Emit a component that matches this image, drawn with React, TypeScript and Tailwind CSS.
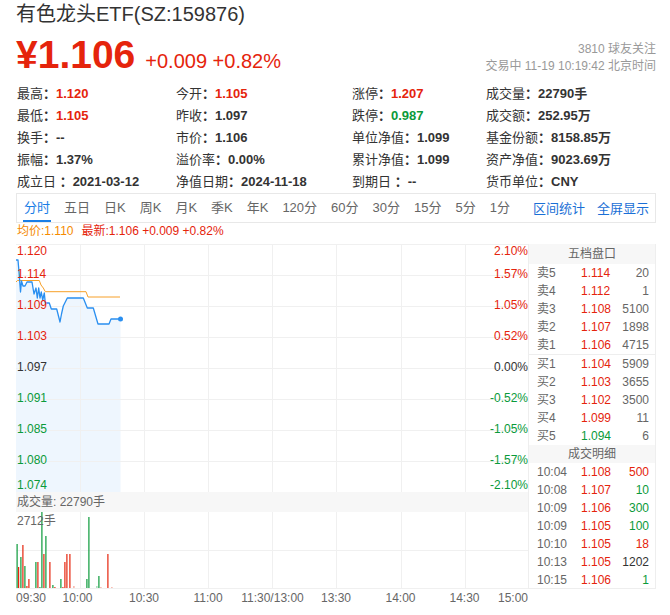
import React from 'react'

const RED = '#e5240c'
const GREEN = '#0a9a3a'

type Cell = { label: string; value: string; color?: string }

const infoRows: Cell[][] = [
  [
    { label: '最高', value: '1.120', color: 'red' },
    { label: '今开', value: '1.105', color: 'red' },
    { label: '涨停', value: '1.207', color: 'red' },
    { label: '成交量', value: '22790手' },
  ],
  [
    { label: '最低', value: '1.105', color: 'red' },
    { label: '昨收', value: '1.097' },
    { label: '跌停', value: '0.987', color: 'green' },
    { label: '成交额', value: '252.95万' },
  ],
  [
    { label: '换手', value: '--' },
    { label: '市价', value: '1.106' },
    { label: '单位净值', value: '1.099' },
    { label: '基金份额', value: '8158.85万' },
  ],
  [
    { label: '振幅', value: '1.37%' },
    { label: '溢价率', value: '0.00%' },
    { label: '累计净值', value: '1.099' },
    { label: '资产净值', value: '9023.69万' },
  ],
  [
    { label: '成立日 ', value: '2021-03-12' },
    { label: '净值日期', value: '2024-11-18' },
    { label: '到期日 ', value: '--' },
    { label: '货币单位', value: 'CNY' },
  ],
]

const tabs = ['分时', '五日', '日K', '周K', '月K', '季K', '年K', '120分', '60分', '30分', '15分', '5分', '1分']

const sells = [
  ['卖5', '1.114', '20'],
  ['卖4', '1.112', '1'],
  ['卖3', '1.108', '5100'],
  ['卖2', '1.107', '1898'],
  ['卖1', '1.106', '4715'],
]
const buys = [
  ['买1', '1.104', '5909', 'red'],
  ['买2', '1.103', '3655', 'red'],
  ['买3', '1.102', '3500', 'red'],
  ['买4', '1.099', '11', 'red'],
  ['买5', '1.094', '6', 'green'],
]
const trades = [
  ['10:04', '1.108', '500', 'red'],
  ['10:08', '1.107', '10', 'green'],
  ['10:09', '1.106', '300', 'green'],
  ['10:09', '1.105', '100', 'green'],
  ['10:10', '1.105', '18', 'red'],
  ['10:13', '1.105', '1202', 'dark'],
  ['10:15', '1.106', '1', 'green'],
]

// y labels: [text, y, colour]
const leftLabels: [string, number, string][] = [
  ['1.120', 6.5, RED], ['1.114', 30, RED], ['1.109', 61, RED], ['1.103', 92, RED],
  ['1.097', 123, '#333'], ['1.091', 154, GREEN], ['1.085', 185, GREEN], ['1.080', 216, GREEN], ['1.074', 241, GREEN],
]
const rightLabels: [string, number, string][] = [
  ['2.10%', 6.5, RED], ['1.57%', 30, RED], ['1.05%', 61, RED], ['0.52%', 92, RED],
  ['0.00%', 123, '#333'], ['-0.52%', 154, GREEN], ['-1.05%', 185, GREEN], ['-1.57%', 216, GREEN], ['-2.10%', 241, GREEN],
]

const pricePts: [number, number][] = [
  [0, 16], [2, 16], [3, 28], [4.5, 48], [5.5, 37], [7, 42], [9, 42], [11, 38], [16, 38], [18, 50], [20, 44],
  [21.3, 54], [22.7, 44], [24, 54], [25.3, 48], [26.7, 56], [28.3, 49], [29.3, 59], [33.3, 59], [35.3, 65],
  [40.7, 65], [44, 78], [45.5, 70], [47.3, 62], [51.3, 54], [67.3, 54], [71.3, 64], [77.3, 64], [82, 80],
  [93, 80], [95, 75], [104.5, 75],
]
const avgPts: [number, number][] = [
  [0, 38], [1.5, 36.5], [23.3, 36.5], [25, 41], [27.3, 44], [29.3, 47.7], [70, 47.7], [72, 53], [104, 53],
]

// volume bars: x, top, colour
const bars: [number, number, string][] = [
  [0.5, 32, 'g'], [2, 55, 'r'], [4.3, 45, 'g'], [6.3, 33, 'r'], [8.3, 54, 'g'], [10.3, 74, 'r'], [12.3, 67, 'r'],
  [19.3, 50, 'g'], [21.3, 50, 'r'], [23.3, 75, 'g'], [25.3, 0, 'g'], [27.3, 42, 'r'], [29.3, 24, 'g'],
  [33.3, 50, 'r'], [36.3, 73, 'g'], [38.3, 75, 'r'], [44.3, 67, 'g'], [46.3, 75, 'r'], [48.3, 50, 'r'],
  [50.3, 42, 'r'], [53.3, 42, 'r'], [57.3, 74, 'lr'], [70.3, 67, 'g'], [72.3, 5, 'g'], [80.3, 74, 'lg'],
  [82.3, 64, 'g'], [84.3, 75, 'lr'], [91.3, 42, 'r'], [95.3, 75, 'lr'],
]
const barColor: Record<string, string> = { g: GREEN, r: RED, lr: '#f2a092', lg: '#8fd3a6' }

const timeLabels: [string, number, 'start' | 'middle' | 'end'][] = [
  ['09:30', 0, 'start'], ['10:00', 61.5, 'middle'], ['10:30', 128, 'middle'], ['11:00', 192, 'middle'],
  ['11:30/13:00', 256.5, 'middle'], ['13:30', 320, 'middle'], ['14:00', 384.5, 'middle'], ['14:30', 448.5, 'middle'],
  ['15:00', 512, 'end'],
]

const pts = (p: [number, number][]) => p.map(([x, y]) => `${x},${y}`).join(' ')

function valueClass(c?: string) {
  if (c === 'red') return 'text-[#e5240c]'
  if (c === 'green') return 'text-[#0a9a3a]'
  return 'text-[#333]'
}

function PriceChart() {
  const fill = pts([...pricePts, [104.5, 248], [0, 248]])
  return (
    <svg width={512} height={248} className="block">
      <polygon points={fill} fill="#eef6fe" />
      {[0, 31, 62, 93, 124, 155, 186, 217].map((y) => (
        <line key={y} x1={0} x2={512} y1={y + 0.5} y2={y + 0.5} stroke="#f0f0f0" />
      ))}
      {[64, 128, 192, 256, 320, 385, 449].map((x) => (
        <line key={x} x1={x + 0.5} x2={x + 0.5} y1={0} y2={248} stroke="#f0f0f0" />
      ))}
      <polyline points={pts(avgPts)} fill="none" stroke="#f7a028" strokeWidth={1} />
      <polyline points={pts(pricePts)} fill="none" stroke="#2a8ff0" strokeWidth={1.3} strokeLinejoin="round" />
      <circle cx={104.5} cy={75} r={2.5} fill="#2a8ff0" />
      {leftLabels.map(([t, y, c]) => (
        <text key={t} x={1} y={y} fontSize={12} fill={c} dominantBaseline="central">{t}</text>
      ))}
      {rightLabels.map(([t, y, c]) => (
        <text key={t} x={512} y={y} fontSize={12} fill={c} textAnchor="end" dominantBaseline="central">{t}</text>
      ))}
    </svg>
  )
}

function VolumeChart() {
  return (
    <svg width={512} height={94} className="block">
      {[38, 76].map((y) => (
        <line key={y} x1={0} x2={512} y1={y + 0.5} y2={y + 0.5} stroke="#f0f0f0" />
      ))}
      {[64, 128, 192, 256, 320, 385, 449].map((x) => (
        <line key={x} x1={x + 0.5} x2={x + 0.5} y1={0} y2={77} stroke="#f0f0f0" />
      ))}
      {bars.map(([x, top, c], i) => (
        <rect key={i} x={x} y={top} width={1.2} height={76 - top} fill={barColor[c]} />
      ))}
      <text x={1} y={9} fontSize={12} fill="#666" dominantBaseline="central">2712手</text>
      {timeLabels.map(([t, x, a]) => (
        <text key={t} x={x} y={86} fontSize={12} fill="#666" textAnchor={a} dominantBaseline="central">{t}</text>
      ))}
    </svg>
  )
}

function BookRow({ row, priceColor }: { row: string[]; priceColor?: string }) {
  return (
    <div className="grid h-[18px] grid-cols-[44px_1fr_auto] pl-[8px] pr-[6px] text-[12px] leading-[18px]">
      <span className="text-[#666]">{row[0]}</span>
      <span className={valueClass(priceColor ?? 'red')}>{row[1]}</span>
      <span className="text-right text-[#666]">{row[2]}</span>
    </div>
  )
}

export default function App() {
  return (
    <div className="h-[615px] w-[670px] overflow-hidden bg-white pl-4 pr-[14px] font-['Liberation_Sans','Noto_Sans_CJK_SC',sans-serif] text-[#333]">
      <div className="text-[20px] leading-[28px] text-[#333]">有色龙头ETF(SZ:159876)</div>

      <div className="mt-[7px] flex items-start justify-between">
        <div className="flex items-baseline">
          <span className="text-[39px] font-bold leading-[40px] text-[#e5240c]">¥1.106</span>
          <span className="ml-[10px] text-[20px] text-[#e5240c]">+0.009 +0.82%</span>
        </div>
        <div className="mt-[6px] text-right text-[12px] leading-[17px] text-[#999]">
          <div>3810 球友关注</div>
          <div>交易中 11-19 10:19:42 北京时间</div>
        </div>
      </div>

      <div className="mt-[7px] grid grid-cols-[159px_176px_134px_1fr] pl-px text-[13px] leading-[22px]">
        {infoRows.flat().map((c, i) => (
          <div key={i} className="whitespace-pre">
            <span className="text-[#333]">{c.label}</span>
            <span className="font-bold">：</span>
            <span className={`font-bold ${valueClass(c.color)}`}>{c.value}</span>
          </div>
        ))}
      </div>

      <div className="flex h-[30px] items-stretch justify-between border border-[#e8e8e8] px-[6px] text-[13px]">
        <div className="flex gap-3">
          {tabs.map((t, i) => (
            <div
              key={t}
              className={
                i === 0
                  ? 'flex items-center border-b-2 border-[#1a7ee6] px-px pt-[2px] text-[#1a7ee6]'
                  : 'flex items-center border-b-2 border-transparent px-px pt-[2px] text-[#666]'
              }
            >
              {t}
            </div>
          ))}
        </div>
        <div className="flex items-center gap-3 pt-[2px] text-[#1a6fd6]">
          <span>区间统计</span>
          <span>全屏显示</span>
        </div>
      </div>

      <div className="flex gap-[8px] pl-px text-[12px] leading-[16px]">
        <span className="text-[#f58a00]">均价:1.110</span>
        <span className="text-[#e5240c]">最新:1.106 +0.009 +0.82%</span>
      </div>

      <div className="mt-[5px] flex">
        <div className="w-[512px]">
          <PriceChart />
          <div className="h-[20px] bg-[#f7f7f7] pl-px text-[12px] leading-[20px] text-[#666]">成交量: 22790手</div>
          <VolumeChart />
        </div>

        <div className="h-[345px] w-[128px] border-x border-b border-[#eeeeee]">
          <div className="h-[20px] bg-[#f7f7f7] text-center text-[12px] leading-[20px] text-[#666]">五档盘口</div>
          {sells.map((r) => (
            <BookRow key={r[0]} row={r} />
          ))}
          <div className="h-px bg-[#eeeeee]" />
          {buys.map((r) => (
            <BookRow key={r[0]} row={r} priceColor={r[3]} />
          ))}
          <div className="h-[18px] bg-[#f7f7f7] text-center text-[12px] leading-[18px] text-[#666]">成交明细</div>
          {trades.map((r, i) => (
            <div key={i} className="grid h-[18px] grid-cols-[44px_1fr_auto] pl-[8px] pr-[6px] text-[12px] leading-[18px]">
              <span className="text-[#666]">{r[0]}</span>
              <span className="text-[#e5240c]">{r[1]}</span>
              <span className={`text-right ${valueClass(r[3])}`}>{r[2]}</span>
            </div>
          ))}
        </div>
      </div>
    </div>
  )
}
